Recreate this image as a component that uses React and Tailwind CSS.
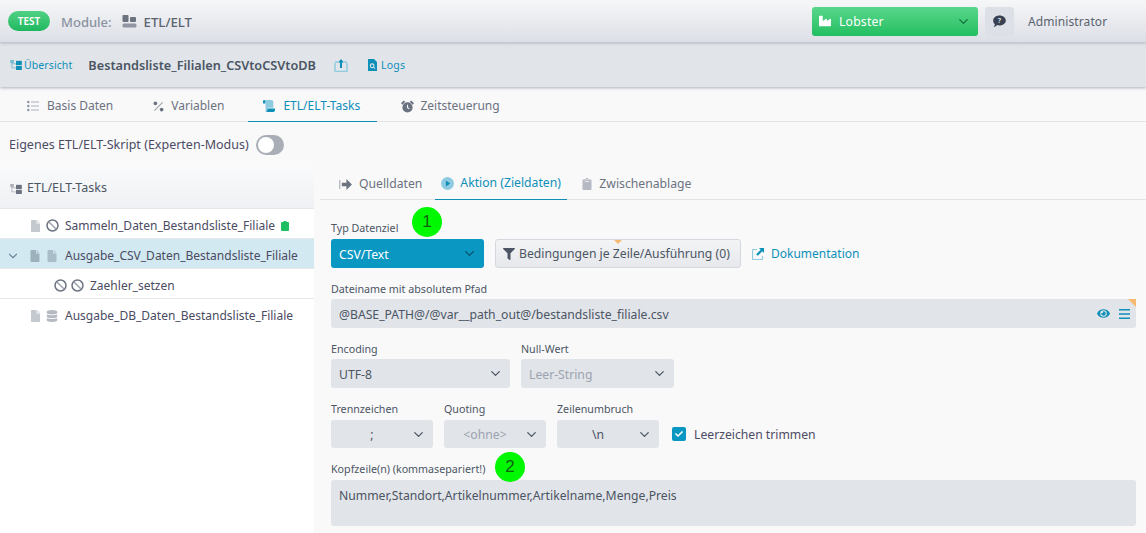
import React from 'react';
import { FaFilter, FaEye, FaIndustry, FaCheck, FaDatabase, FaClipboard } from 'react-icons/fa';
import { ChevronDown } from 'lucide-react';

const FileIcon = ({ className }) => (
  <svg className={className} viewBox="0 0 12 16" fill="currentColor">
    <path d="M1 0h6.5v4.5H12V15a1 1 0 01-1 1H1a1 1 0 01-1-1V1a1 1 0 011-1z" />
    <path d="M8.5 0L12 3.5H8.5z" opacity="0.7" />
  </svg>
);

const BanIcon = ({ className = '' }) => (
  <svg className={`w-[13px] h-[13px] text-[#6b7280] ${className}`} viewBox="0 0 14 14" fill="none" stroke="currentColor" strokeWidth="1.6">
    <circle cx="7" cy="7" r="5.9" />
    <path d="M2.9 2.9l8.2 8.2" stroke="#9ca3af" />
  </svg>
);

const SitemapIcon = ({ className }) => (
  <svg className={className} viewBox="0 0 14 12">
    <path d="M2 3v6.500h5M2 4.500h5" fill="none" stroke="currentColor" strokeOpacity="0.5" strokeWidth="1" />
    <rect x="0" y="0" width="4.500" height="3.500" fill="currentColor" fillOpacity="0.5" />
    <rect x="7" y="1" width="7" height="5" fill="currentColor" />
    <rect x="7" y="7" width="7" height="5" fill="currentColor" />
  </svg>
);

const Select = ({ children, className = '', textClass = 'text-[#4b5563]', center }) => (
  <div className={`flex items-center rounded-[3px] bg-[#e1e4e9] pr-[7px] ${className}`}>
    <span className={`flex-1 pt-[3px] text-[12.2px] ${center ? 'text-center pl-[2px]' : 'pl-2'} ${textClass}`}>{children}</span>
    <ChevronDown className="w-[15px] h-[15px] text-[#4b5563]" strokeWidth={2} />
  </div>
);

const Label = ({ children, className = '' }) => (
  <div className={`text-[10.7px] leading-[14px] text-[#4b5563] ${className}`}>{children}</div>
);

const Marker = ({ n, className }) => (
  <div className={`absolute w-[30px] h-[30px] rounded-full bg-[#00f800] flex items-center justify-center text-[17px] text-[#126012] font-['Liberation_Sans',sans-serif] ${className}`}>{n}</div>
);

const TopTab = ({ icon, label, active, className = '' }) => (
  <div className={`h-[35px] pt-[3px] flex items-center gap-[8px] text-[12px] ${active ? 'text-[#0e8fb8] border-b border-[#0e8fb8]' : 'text-[#6b7280]'} ${className}`}>
    {icon}
    {label}
  </div>
);

const TreeRow = ({ children, className = '' }) => (
  <div className={`h-[30px] pt-1 flex items-center text-[12px] text-[#4b4b63] border-b border-[#e5e7eb] ${className}`}>{children}</div>
);

export default function App() {
  return (
    <div className="w-[1146px] h-[533px] overflow-hidden bg-[#f9f9fa] font-['Noto_Sans',sans-serif]">
      {/* header */}
      <div className="relative z-20 h-[43px] flex items-center bg-gradient-to-b from-[#f6f7f8] to-[#dcdfe6] border-b border-[#c3c8d3] shadow-sm pl-2">
        <div className="w-[42px] h-5 rounded-full bg-gradient-to-b from-[#4fd184] to-[#1bb85f] text-white text-[10px] font-semibold flex items-center justify-center">TEST</div>
        <span className="ml-[11px] pt-[3px] text-[13px] font-medium text-[#8a93a0]">Module:</span>
        <svg className="ml-[10px] w-[15px] h-[13px] text-[#6b7280]" viewBox="0 0 14 13" fill="currentColor">
          <rect x="0" y="0" width="6" height="7" rx="1" />
          <rect x="7.500" y="2" width="6" height="5" rx="1" />
          <rect x="0" y="8.500" width="14" height="4" rx="1.500" opacity="0.7" />
        </svg>
        <span className="ml-[7px] pt-[3px] text-[13.2px] font-medium text-[#5b6370]">ETL/ELT</span>
        <div className="ml-auto w-[166px] h-[29px] rounded-[3px] bg-gradient-to-b from-[#57d68b] to-[#1ebf60] flex items-center pl-[7px] pr-[7px] text-white text-[12.2px] tracking-[0.2px]">
          <FaIndustry className="w-3 h-3" />
          <span className="ml-2 flex-1 pt-[2px]">Lobster</span>
          <ChevronDown className="w-[15px] h-[15px] text-[#166b3c]" strokeWidth={2} />
        </div>
        <div className="ml-[7px] w-[29px] h-[29px] rounded-[3px] bg-[#dde0e6] flex items-center justify-center">
          <svg className="w-[13px] h-[13px] text-[#374151]" viewBox="0 0 14 14" fill="currentColor">
            <path d="M7 0.500c3.800 0 6.800 2.400 6.800 5.400S10.800 11.300 7 11.300c-.9 0-1.800-.1-2.600-.4C3.400 12.200 1.800 13 .5 13c.8-.8 1.400-2 1.500-3C.8 9 .2 7.500.2 5.900.2 2.900 3.200.5 7 .5z" />
            <text x="7" y="8.600" textAnchor="middle" fontSize="7.500" fontWeight="700" fill="#dde0e6">?</text>
          </svg>
        </div>
        <span className="ml-[14px] mr-[39px] pt-[2px] w-[79px] whitespace-nowrap text-[12px] tracking-[0.1px] text-[#5b6370]">Administrator</span>
      </div>

      {/* sub bar */}
      <div className="relative z-10 h-[44px] flex items-center bg-[#e1e5ea] shadow-[0_1px_3px_rgba(80,90,110,0.45)] pl-[10px]">
        <SitemapIcon className="w-[12px] h-[10px] text-[#0e8fb8]" />
        <span className="ml-[2px] pt-[1px] text-[10.5px] tracking-[0.1px] text-[#0e8fb8]">Übersicht</span>
        <span className="ml-[16px] pt-[1px] text-[12.7px] font-semibold text-[#4b5563]">Bestandsliste_Filialen_CSVtoCSVtoDB</span>
        <svg className="ml-[18px] w-[14px] h-[14px]" viewBox="0 0 14 14">
          <path d="M1 5v7.500a1 1 0 001 1h10a1 1 0 001-1V5" fill="none" stroke="#8fcbe0" strokeWidth="1.500" />
          <path d="M1 4h3M10 4h3" stroke="#8fcbe0" strokeWidth="1.500" />
          <path d="M7 1L4 4.500h2V10h2V4.500h2z" fill="#0e8fb8" />
        </svg>
        <svg className="ml-[20px] w-[9px] h-[12px]" viewBox="0 0 12 16" fill="#0e8fb8">
          <path d="M0 0h8l4 4v12H0z" />
          <circle cx="5.500" cy="9" r="2.500" fill="none" stroke="#e1e5ea" strokeWidth="1.400" />
          <path d="M7.500 11l2 2" stroke="#e1e5ea" strokeWidth="1.400" />
        </svg>
        <span className="ml-[4px] pt-[1px] text-[10.5px] tracking-[0.3px] text-[#0e8fb8]">Logs</span>
      </div>

      {/* tabs */}
      <div className="h-[35px] flex border-b border-[#e2e4e8]">
        <TopTab
          className="pl-[27px] pr-[40px]"
          label="Basis Daten"
          icon={
            <svg className="w-[12px] h-[12px] text-[#8a93a0]" viewBox="0 0 12 12" fill="currentColor">
              <circle cx="1.300" cy="2" r="1.200" /><circle cx="1.300" cy="6" r="1.200" /><circle cx="1.300" cy="10" r="1.200" />
              <path d="M4 1.400h8v1.200H4zM4 5.400h8v1.200H4zM4 9.400h8v1.200H4z" opacity="0.7" />
            </svg>
          }
        />
        <TopTab
          className="pr-[24px] !gap-[7px]"
          label="Variablen"
          icon={
            <svg className="w-[11px] h-[11px] text-[#6b7280]" viewBox="0 0 12 12" fill="currentColor">
              <path d="M10 1l1 1-9 9-1-1z" opacity="0.6" />
              <circle cx="2.600" cy="2.600" r="2" /><circle cx="9.400" cy="9.400" r="2" />
            </svg>
          }
        />
        <TopTab
          active
          className="pl-[15px] w-[129px]"
          label="ETL/ELT-Tasks"
          icon={
            <svg className="w-[12px] h-[12px]" viewBox="0 0 14 14">
              <path d="M0 1.500a1.500 1.500 0 013 0V4H0z" fill="#0e8fb8" />
              <path d="M1.500 0H10a2 2 0 012 2v7H5v3a2 2 0 01-2 2V1.500z" fill="#8fcbe0" />
              <path d="M5 10h9v2a2 2 0 01-2 2H3a2 2 0 002-2z" fill="#0e8fb8" />
            </svg>
          }
        />
        <TopTab
          className="ml-[24px] !gap-[6px]"
          label="Zeitsteuerung"
          icon={
            <svg className="w-[13px] h-[13px] text-[#6b7280]" viewBox="0 0 14 14" fill="currentColor">
              <circle cx="7" cy="8" r="5.500" />
              <path d="M7 5v3.200l2 1.200" stroke="#f9f9fa" strokeWidth="1.100" fill="none" />
              <path d="M0 3.500L3 .5 4.500 2 1.500 5zM14 3.500L11 .5 9.500 2l3 3z" />
            </svg>
          }
        />
      </div>

      {/* expert mode */}
      <div className="h-[43px] pt-[3px] flex items-center pl-[9px] gap-[7px] text-[12.5px] text-[#4b4b63]">
        <span>Eigenes ETL/ELT-Skript (Experten-Modus)</span>
        <div className="w-[28px] h-5 rounded-full bg-[#a9adb5] p-[2px]">
          <div className="w-4 h-4 rounded-full bg-white" />
        </div>
      </div>

      {/* content */}
      <div className="flex gap-[6px]">
        {/* task tree */}
        <div className="w-[314px] h-[368px] bg-white shrink-0">
          <div className="h-[44px] pt-1 flex items-center pl-[10px] gap-[5px] bg-gradient-to-b from-[#f9fafb] to-[#f0f1f4] border-b border-[#e5e7eb] text-[12.5px] text-[#4b5563]">
            <SitemapIcon className="w-[12px] h-[10px] text-[#6b7280]" />
            ETL/ELT-Tasks
          </div>
          <TreeRow className="pl-[31px]">
            <FileIcon className="w-[9px] h-[12px] text-[#c4c8cf]" />
            <BanIcon className="ml-[6px]" />
            <span className="ml-[6px]">Sammeln_Daten_Bestandsliste_Filiale</span>
            <svg className="ml-[6px] w-[8px] h-[10px] text-[#1ebf60]" viewBox="0 0 8 10" fill="currentColor">
              <path d="M2.500 0h3v1H7a1 1 0 011 1v7a1 1 0 01-1 1H1a1 1 0 01-1-1V2a1 1 0 011-1h1.500z" />
            </svg>
          </TreeRow>
          <TreeRow className="bg-[#d2e9f1] pl-[6px] border-[#d2e9f1]">
            <ChevronDown className="w-[14px] h-[14px] text-[#6b8799]" strokeWidth={2} />
            <FileIcon className="ml-[10px] w-[10px] h-[12px] text-[#9db1bd]" />
            <FileIcon className="ml-[7px] w-[10px] h-[12px] text-[#a9bdc9]" />
            <span className="ml-[8px]">Ausgabe_CSV_Daten_Bestandsliste_Filiale</span>
          </TreeRow>
          <TreeRow className="pl-[54px]">
            <BanIcon />
            <BanIcon className="ml-[4px]" />
            <span className="ml-[6px]">Zaehler_setzen</span>
          </TreeRow>
          <TreeRow className="pl-[31px] border-b-0">
            <FileIcon className="w-[9px] h-[12px] text-[#c4c8cf]" />
            <FaDatabase className="ml-[6px] w-[12px] h-[12px] text-[#b5b9c1]" />
            <span className="ml-[7px]">Ausgabe_DB_Daten_Bestandsliste_Filiale</span>
          </TreeRow>
        </div>

        {/* action details */}
        <div className="relative flex-1 pl-[11px]">
          <div className="h-[35px] flex items-center border-b border-[#e2e4e8] -ml-[11px] pl-[11px] text-[12.2px] whitespace-nowrap">
            <div className="flex items-center h-full pt-[4px] px-[8px] gap-[7px] text-[#6b7280]">
              <svg className="w-[13px] h-[11px] text-[#6b7280]" viewBox="0 0 14 12">
                <path d="M0 1h1.500v10H0z" fill="#b5b9c1" />
                <path d="M3 4h5V0l6 6-6 6V8H3z" fill="currentColor" />
              </svg>
              Quelldaten
            </div>
            <div className="flex items-center h-[35px] pt-[4px] ml-[5px] pl-[6px] gap-[6px] text-[#0e8fb8] border-b border-[#0e8fb8] w-[132px]">
              <svg className="w-[13px] h-[13px]" viewBox="0 0 12 12">
                <circle cx="6" cy="6" r="6" fill="#8fcbe0" />
                <path d="M4.500 3.200l4 2.800-4 2.800z" fill="#0e8fb8" />
              </svg>
              Aktion (Zieldaten)
            </div>
            <div className="flex items-center h-full pt-[4px] ml-[15px] gap-[7px] text-[#6b7280]">
              <FaClipboard className="w-[10px] h-[12px] text-[#b5b9c1]" />
              Zwischenablage
            </div>
          </div>

          <Label className="mt-[21px] mb-[4px]">Typ Datenziel</Label>
          <div className="flex items-center">
            <div className="w-[153px] h-[29px] rounded-[3px] bg-[#0a97c2] flex items-center pl-2 pr-[7px] text-[12.2px] text-white">
              <span className="flex-1 pt-[3px]">CSV/Text</span>
              <ChevronDown className="w-[15px] h-[15px] text-[#0b4f68]" strokeWidth={2} />
            </div>
            <div className="relative ml-[11px] w-[246px] h-[29px] rounded-[3px] border border-[#d5d8de] bg-gradient-to-b from-[#f3f4f6] to-[#e6e8ec] flex items-center pl-[7px] gap-[4px] text-[12.2px] text-[#4b5563] whitespace-nowrap">
              <FaFilter className="w-[12px] h-[12px] text-[#4b5563]" />
              <span className="pt-[2px]">Bedingungen je Zeile/Ausführung (0)</span>
              <div className="absolute top-0 left-[118px] w-0 h-0 border-x-[4px] border-x-transparent border-t-[4px] border-t-[#f5b971]" />
            </div>
            <svg className="ml-[11px] w-[12px] h-[12px]" viewBox="0 0 12 12">
              <path d="M5 1.500H1.500a1 1 0 00-1 1v8a1 1 0 001 1h8a1 1 0 001-1V8" fill="none" stroke="#8fcbe0" strokeWidth="1.200" />
              <path d="M7 0h5v5l-1.700-1.700-4.500 4.500-1.600-1.600 4.500-4.500z" fill="#0e8fb8" />
            </svg>
            <span className="ml-[7px] pt-[1px] text-[12px] text-[#0e8fb8]">Dokumentation</span>
          </div>

          <Label className="mt-[14px] mb-[3px]">Dateiname mit absolutem Pfad</Label>
          <div className="relative w-[805px] h-[29px] rounded-[3px] bg-[#e1e4e9] flex items-center pl-2 pr-[6px] text-[12.2px] text-[#4b5563]">
            <span className="flex-1 pt-[3px]">@BASE_PATH@/@var__path_out@/bestandsliste_filiale.csv</span>
            <FaEye className="w-[13px] h-[13px] text-[#0e8fb8]" />
            <svg className="ml-[9px] w-[11px] h-[10px]" viewBox="0 0 11 10" fill="#0e8fb8">
              <path d="M0 0h11v1.400H0zM0 4.300h11v1.400H0zM0 8.600h11V10H0z" />
            </svg>
            <div className="absolute top-0 right-0 w-0 h-0 border-l-[8px] border-l-transparent border-t-[8px] border-t-[#f5b971]" />
          </div>

          <div className="flex gap-[11px] mt-[14px]">
            <div>
              <Label className="mb-[3px]">Encoding</Label>
              <Select className="w-[179px] h-[29px]">UTF-8</Select>
            </div>
            <div>
              <Label className="mb-[3px]">Null-Wert</Label>
              <Select className="w-[153px] h-[29px]" textClass="text-[#9ca3af]">Leer-String</Select>
            </div>
          </div>

          <div className="flex gap-[11px] mt-[14px] items-end">
            <div>
              <Label className="mb-[4px]">Trennzeichen</Label>
              <Select center className="w-[102px] h-[28px]">;</Select>
            </div>
            <div>
              <Label className="mb-[4px]">Quoting</Label>
              <Select center className="w-[102px] h-[28px]" textClass="text-[#9ca3af]">{'<ohne>'}</Select>
            </div>
            <div>
              <Label className="mb-[4px]">Zeilenumbruch</Label>
              <Select center className="w-[102px] h-[28px]">\n</Select>
            </div>
            <div className="h-[28px] flex items-center gap-2 ml-[2px] text-[12.2px] text-[#4b4b63]">
              <div className="w-[14px] h-[14px] rounded-[2px] bg-[#0a97c2] flex items-center justify-center">
                <FaCheck className="w-[8px] h-[8px] text-white" />
              </div>
              <span className="pt-[3px]">Leerzeichen trimmen</span>
            </div>
          </div>

          <Label className="mt-[14px] mb-[4px]">Kopfzeile(n) (kommasepariert!)</Label>
          <div className="w-[805px] h-[46px] rounded-[3px] bg-[#e1e4e9] px-2 pt-[7px] text-[12.2px] text-[#4b5563]">
            Nummer,Standort,Artikelnummer,Artikelname,Menge,Preis
          </div>

          <Marker n="1" className="left-[92px] top-[42px]" />
          <Marker n="2" className="left-[175px] top-[287px]" />
        </div>
      </div>
    </div>
  );
}
